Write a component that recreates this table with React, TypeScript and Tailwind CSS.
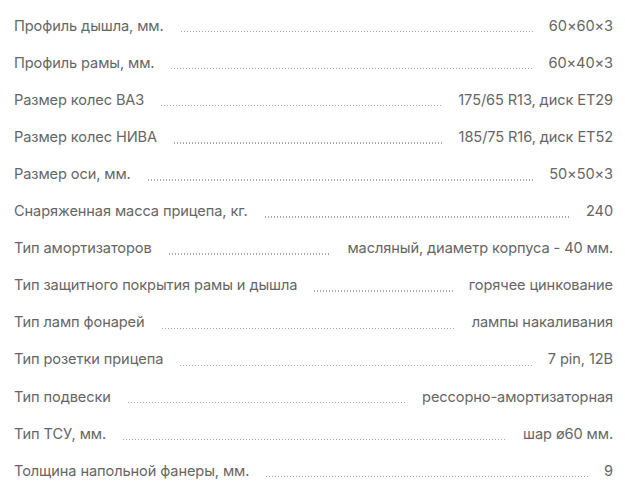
import React from 'react';

const specs: [string, string][] = [
  ['Профиль дышла, мм.', '60×60×3'],
  ['Профиль рамы, мм.', '60×40×3'],
  ['Размер колес ВАЗ', '175/65 R13, диск ET29'],
  ['Размер колес НИВА', '185/75 R16, диск ET52'],
  ['Размер оси, мм.', '50×50×3'],
  ['Снаряженная масса прицепа, кг.', '240'],
  ['Тип амортизаторов', 'масляный, диаметр корпуса - 40 мм.'],
  ['Тип защитного покрытия рамы и дышла', 'горячее цинкование'],
  ['Тип ламп фонарей', 'лампы накаливания'],
  ['Тип розетки прицепа', '7 pin, 12В'],
  ['Тип подвески', 'рессорно-амортизаторная'],
  ['Тип ТСУ, мм.', 'шар ø60 мм.'],
  ['Толщина напольной фанеры, мм.', '9'],
];

export default function App() {
  return (
    <div className="bg-white w-[625px] h-[504px] pl-[14px] pr-[12px] pt-[8px] font-['Inter',sans-serif] text-[14.6px] text-[#666] tracking-[-0.1px]">
      {specs.map(([label, value]) => (
        <div key={label} className="h-[37.1px] flex items-center">
          <span className="whitespace-nowrap">{label}</span>
          {/* точки */}
          <div className="flex-1 mx-4 self-center mt-[10px] h-[1.5px] bg-[radial-gradient(circle,#a8a8a8_0.7px,transparent_0.9px)] bg-[length:3px_1.5px] bg-repeat-x" />
          <span className="whitespace-nowrap">{value}</span>
        </div>
      ))}
    </div>
  );
}
